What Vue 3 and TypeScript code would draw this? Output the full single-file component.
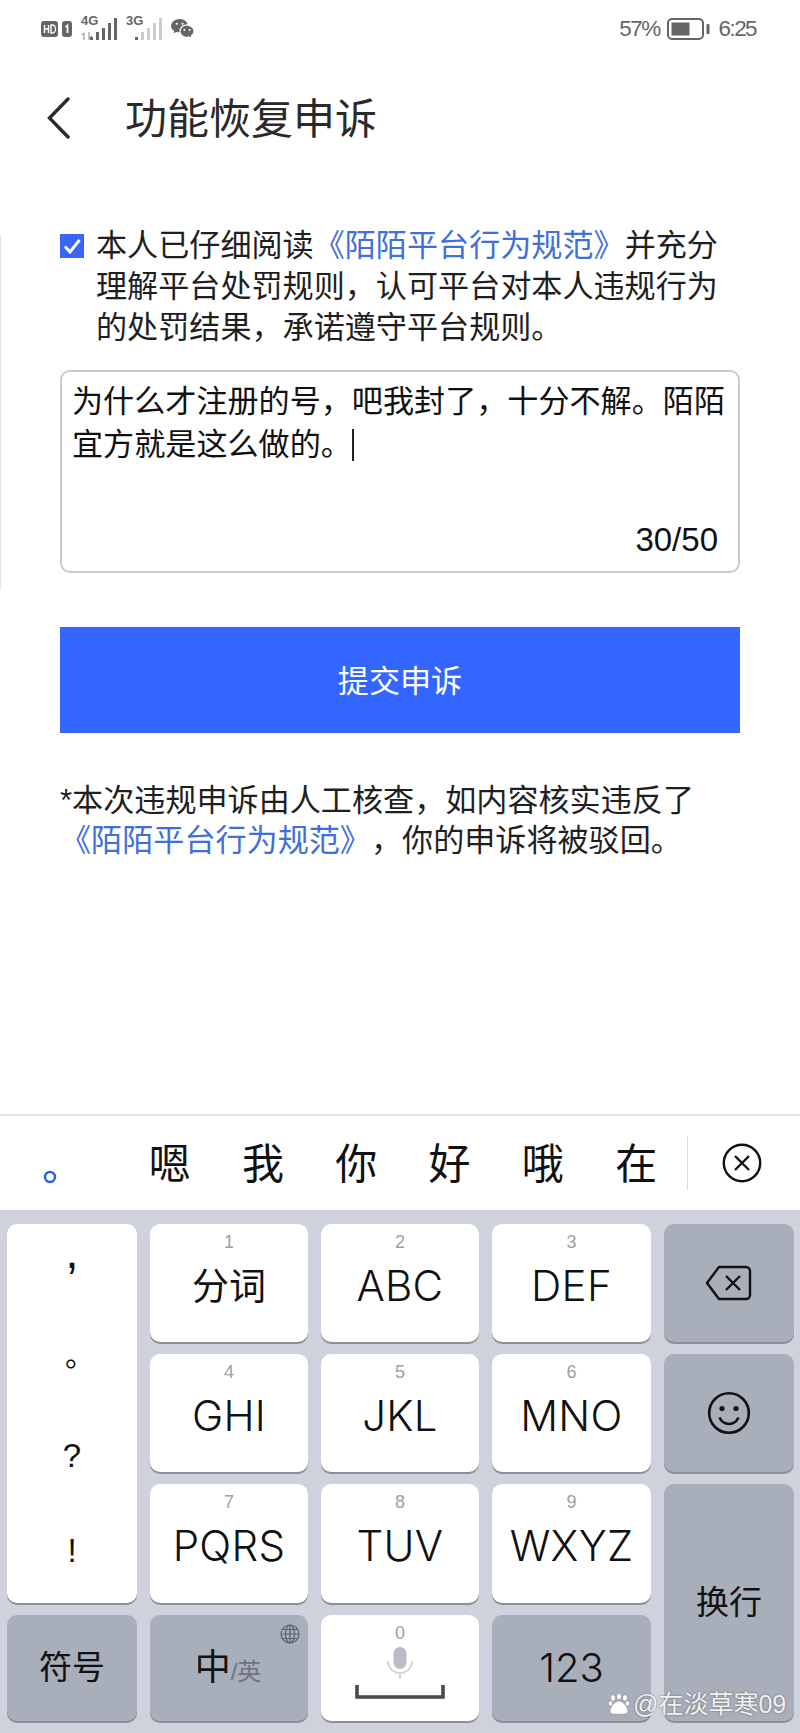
<script setup lang="ts">
interface KeyDef {
  num?: string
  label: string
  zh?: boolean
}
const row1: KeyDef[] = [
  { num: '1', label: '分词', zh: true },
  { num: '2', label: 'ABC' },
  { num: '3', label: 'DEF' }
]
const row2: KeyDef[] = [
  { num: '4', label: 'GHI' },
  { num: '5', label: 'JKL' },
  { num: '6', label: 'MNO' }
]
const row3: KeyDef[] = [
  { num: '7', label: 'PQRS' },
  { num: '8', label: 'TUV' },
  { num: '9', label: 'WXYZ' }
]
const candidates: string[] = ['嗯', '我', '你', '好', '哦', '在']
const bars = [3, 8, 12, 17, 22]
</script>

<template>
  <div class="page">
    <div class="edge-line"></div>

    <header class="status">
      <div class="status-left">
        <svg class="ic-hd" width="31" height="17" viewBox="0 0 31 17">
          <rect x="0" y="0" width="17" height="16" rx="3" fill="#666" />
          <rect x="21" y="0" width="10" height="16" rx="3" fill="#666" />
          <path d="M3.500 4v8M7.500 4v8M3.500 8h4M10 4v8h1.500a3 4 0 0 0 0-8z" stroke="#fff" stroke-width="1.400" fill="none" />
          <path d="M24.500 6l2-1.500V12" stroke="#fff" stroke-width="1.800" fill="none" />
        </svg>
        <div class="net">
          <span class="net-label">4G</span>
          <svg class="net-arrows" width="12" height="8" viewBox="0 0 12 8">
            <path d="M3 8V1M1 3l2-2M8 0v7l3-3" stroke="#aaa" stroke-width="1.400" fill="none" />
          </svg>
          <svg class="net-bars" width="27" height="22" viewBox="0 0 27 22">
            <rect v-for="(b, i) in bars" :key="i" :x="i * 6" :y="22 - b" width="3" :height="b" fill="#666" />
          </svg>
        </div>
        <div class="net">
          <span class="net-label">3G</span>
          <svg class="net-bars" width="27" height="22" viewBox="0 0 27 22">
            <rect v-for="(b, i) in bars" :key="i" :x="i * 6" :y="22 - b" width="3" :height="b" :fill="i === 0 ? '#666' : '#ccc'" />
          </svg>
        </div>
        <svg class="ic-wechat" width="23" height="20" viewBox="0 0 24 21">
          <path d="M9 0C4 0 0 3.200 0 7.200c0 2.300 1.300 4.200 3.300 5.500L2.500 15l2.800-1.400c1 .3 2 .4 3 .4h.7a6 6 0 0 1-.2-1.500C8.800 8.500 12.500 5.500 17.500 5.500 16.500 2.300 13 0 9 0z" fill="#666" />
          <path d="M16.500 7C12.400 7 10 9.700 10 12.800s2.700 5.800 6.500 5.800c.9 0 1.700-.1 2.500-.4l2.300 1.300-.6-2.100c1.700-1.100 2.800-2.800 2.800-4.600C23.500 9.700 20.500 7 16.500 7z" fill="#666" />
          <circle cx="6" cy="5" r="1.100" fill="#fff" />
          <circle cx="12" cy="5" r="1.100" fill="#fff" />
          <circle cx="14" cy="11.500" r="1" fill="#fff" />
          <circle cx="19.500" cy="11.500" r="1" fill="#fff" />
        </svg>
      </div>
      <div class="status-right">
        <span class="pct">57%</span>
        <svg class="battery" width="43" height="22" viewBox="0 0 43 22">
          <rect x="1" y="1" width="35" height="20" rx="4" fill="none" stroke="#666" stroke-width="2" />
          <rect x="4.500" y="4.500" width="18" height="13" fill="#666" />
          <rect x="39.500" y="6" width="3" height="10" rx="1" fill="#666" />
        </svg>
        <span class="clock">6:25</span>
      </div>
    </header>

    <nav class="nav">
      <svg class="back" width="24" height="42" viewBox="0 0 24 42">
        <path d="M21 2 2.500 21 21 40" fill="none" stroke="#2b2b2b" stroke-width="3.400" stroke-linecap="round" />
      </svg>
      <h1 class="title">功能恢复申诉</h1>
    </nav>

    <main class="content">
      <div class="consent">
        <span class="check">
          <svg width="24" height="24" viewBox="0 0 24 24">
            <rect width="24" height="24" fill="#3a66f5" />
            <path d="M5 12.500l5 5.500 9.500-12" fill="none" stroke="#fff" stroke-width="3" />
          </svg>
        </span>
        <p class="consent-text">本人已仔细阅读<span class="link">《陌陌平台行为规范》</span>并充分<br />理解平台处罚规则，认可平台对本人违规行为<br />的处罚结果，承诺遵守平台规则。</p>
      </div>

      <div class="field">
        <p class="field-text">为什么才注册的号，吧我封了，十分不解。陌陌<br />宜方就是这么做的。<span class="caret"></span></p>
        <span class="counter">30/50</span>
      </div>

      <button class="submit" type="button">提交申诉</button>

      <p class="note">*本次违规申诉由人工核查，如内容核实违反了<br /><span class="link">《陌陌平台行为规范》</span>，你的申诉将被驳回。</p>
    </main>

    <section class="candidates">
      <span class="cand-dot">
        <svg width="14" height="14" viewBox="0 0 14 14"><circle cx="7" cy="7" r="5" fill="none" stroke="#2a62d8" stroke-width="2.400" /></svg>
      </span>
      <span v-for="c in candidates" :key="c" class="cand">{{ c }}</span>
      <span class="cand-div"></span>
      <svg class="cand-close" width="40" height="40" viewBox="0 0 40 40">
        <circle cx="20" cy="20" r="18.200" fill="none" stroke="#111" stroke-width="2.400" />
        <path d="M13 13l14 14M27 13 13 27" stroke="#111" stroke-width="2.400" />
      </svg>
    </section>

    <section class="keyboard">
      <div class="key key-symbols">
        <span class="sym sym-comma">,</span>
        <span class="sym sym-dot">。</span>
        <span class="sym">?</span>
        <span class="sym">!</span>
      </div>

      <div v-for="k in row1" :key="k.label" class="key">
        <span class="num">{{ k.num }}</span>
        <span :class="k.zh ? 'label-zh' : 'label'">{{ k.label }}</span>
      </div>
      <div class="key key-gray key-center">
        <svg width="48" height="36" viewBox="0 0 48 36">
          <path d="M14 2h27a4 4 0 0 1 4 4v24a4 4 0 0 1-4 4H14L2 18z" fill="none" stroke="#111" stroke-width="2.400" stroke-linejoin="round" />
          <path d="M21 11l14 14M35 11 21 25" stroke="#111" stroke-width="2.400" />
        </svg>
      </div>

      <div v-for="k in row2" :key="k.label" class="key">
        <span class="num">{{ k.num }}</span>
        <span class="label">{{ k.label }}</span>
      </div>
      <div class="key key-gray key-center">
        <svg width="44" height="44" viewBox="0 0 44 44">
          <circle cx="22" cy="22" r="19.800" fill="none" stroke="#111" stroke-width="2.600" />
          <circle cx="15" cy="17.500" r="2.600" fill="#111" />
          <circle cx="29" cy="17.500" r="2.600" fill="#111" />
          <path d="M12.500 26.500c2 4.500 5.500 6.500 9.500 6.500s7.500-2 9.500-6.500" fill="none" stroke="#111" stroke-width="2.600" />
        </svg>
      </div>

      <div v-for="k in row3" :key="k.label" class="key">
        <span class="num">{{ k.num }}</span>
        <span class="label">{{ k.label }}</span>
      </div>
      <div class="key key-gray key-center key-enter">
        <span class="zh-label">换行</span>
      </div>

      <div class="key key-gray key-center">
        <span class="zh-label">符号</span>
      </div>
      <div class="key key-gray key-center key-lang">
        <svg class="globe" width="20" height="20" viewBox="0 0 20 20">
          <g fill="none" stroke="#5d6270" stroke-width="1.200">
            <circle cx="10" cy="10" r="9" />
            <ellipse cx="10" cy="10" rx="4.500" ry="9" />
            <path d="M10 1v18M1 10h18M2.200 5.500h15.600M2.200 14.500h15.600" />
          </g>
        </svg>
        <span class="lang"><span class="lang-zh">中</span><span class="lang-en">/英</span></span>
      </div>
      <div class="key key-space">
        <span class="num">0</span>
        <svg class="mic" width="28" height="32" viewBox="0 0 28 32">
          <rect x="7.500" y="0" width="13" height="22" rx="6.500" fill="#b9bcc6" />
          <path d="M2 14c0 7 5 12 12 12s12-5 12-12" fill="none" stroke="#d4d6dc" stroke-width="2" />
          <path d="M14 26v6" stroke="#d4d6dc" stroke-width="2" />
        </svg>
        <svg class="spacebar" width="90" height="14" viewBox="0 0 90 14">
          <path d="M2 0v12h86V0" fill="none" stroke="#4a4a4a" stroke-width="3.600" />
        </svg>
      </div>
      <div class="key key-gray key-center">
        <span class="label">123</span>
      </div>
    </section>

    <div class="watermark">
      <svg width="22" height="22" viewBox="0 0 22 22">
        <g fill="#fff" stroke="#555" stroke-width=".4">
          <ellipse cx="5" cy="5" rx="2.400" ry="3.200" />
          <ellipse cx="17" cy="5" rx="2.400" ry="3.200" />
          <ellipse cx="11" cy="3.500" rx="2.400" ry="3.200" />
          <ellipse cx="2.500" cy="10.500" rx="2.200" ry="2.800" />
          <ellipse cx="19.500" cy="10.500" rx="2.200" ry="2.800" />
          <path d="M11 8c4 0 9 6 9 10 0 3-3 3.500-5 3.200H7C4.500 21.500 2 21 2 18c0-4 5-10 9-10z" />
        </g>
      </svg>
      <span>@在淡草寒09</span>
    </div>
  </div>
</template>

<style scoped>
.page {
  position: relative;
  width: 800px;
  height: 1733px;
  display: flex;
  flex-direction: column;
  background: #fff;
  color: #1f1f1f;
  font-family: "Liberation Sans", "Noto Sans CJK SC", sans-serif;
  text-spacing-trim: space-all;
  overflow: hidden;
}
.edge-line {
  position: absolute;
  left: 0;
  top: 235px;
  width: 1px;
  height: 355px;
  background: #e4e4e4;
}
.status {
  height: 58px;
  flex: none;
  display: flex;
  justify-content: space-between;
  align-items: center;
  padding: 0 44px 0 41px;
  color: #666;
}
.status-left {
  display: flex;
  align-items: center;
  gap: 9px;
}
.net {
  position: relative;
  width: 36px;
  height: 24px;
}
.net-label {
  position: absolute;
  left: 0;
  top: -3px;
  font-family: "Liberation Sans Narrow", "Liberation Sans", sans-serif;
  font-size: 13px;
  font-weight: 700;
  line-height: 14px;
  color: #666;
}
.net-arrows {
  position: absolute;
  left: 0;
  bottom: 1px;
}
.net-bars {
  position: absolute;
  right: 0;
  bottom: 1px;
}
.status-right {
  display: flex;
  align-items: center;
  gap: 7px;
  font-size: 22.5px;
  letter-spacing: -1.600px;
}
.clock {
  margin-left: 2px;
}
.nav {
  height: 120px;
  flex: none;
  display: flex;
  align-items: center;
  padding-left: 47px;
}
.back {
  flex: none;
}
.title {
  margin: 4px 0 0 54px;
  font-size: 42px;
  line-height: 60px;
  font-weight: 400;
  color: #2a2a2a;
}
.content {
  flex: 1;
  padding: 47px 60px 0;
  font-size: 31.1px;
}
.consent {
  display: flex;
  align-items: flex-start;
  gap: 12px;
}
.check {
  flex: none;
  display: block;
  width: 24px;
  height: 24px;
  margin-top: 9px;
}
.check svg {
  display: block;
}
.consent-text {
  margin: 0;
  line-height: 41px;
}
.link {
  color: #3f6fd8;
}
.field {
  position: relative;
  box-sizing: border-box;
  height: 203px;
  margin-top: 22px;
  padding: 8px 9px 8px 10px;
  border: 2px solid #cbcbcb;
  border-radius: 10px;
}
.field-text {
  margin: 0;
  line-height: 43px;
  color: #111;
}
.caret {
  display: inline-block;
  width: 2px;
  height: 32px;
  vertical-align: -6px;
  background: #222;
}
.counter {
  position: absolute;
  right: 20px;
  bottom: 13px;
  font-size: 33px;
  line-height: 36px;
  color: #111;
}
.submit {
  display: block;
  width: 100%;
  height: 106px;
  margin-top: 54px;
  padding: 0 0 4px;
  border: 0;
  background: #3366ff;
  color: #fff;
  font: inherit;
}
.note {
  margin: 48px 0 0;
  line-height: 40px;
}
.candidates {
  flex: none;
  box-sizing: border-box;
  height: 96px;
  display: flex;
  align-items: center;
  border-top: 2px solid #e2e2e2;
}
.cand-dot {
  flex: none;
  width: 123px;
  padding: 28px 0 0 43px;
  box-sizing: border-box;
  line-height: 0;
}
.cand {
  flex: none;
  width: 93.3px;
  margin-top: 4px;
  text-align: center;
  font-size: 42px;
  line-height: 56px;
  color: #111;
}
.cand-div {
  flex: none;
  width: 1px;
  height: 54px;
  margin-left: 4px;
  background: #d8d8d8;
}
.cand-close {
  flex: none;
  margin-left: 34px;
}
.keyboard {
  flex: none;
  box-sizing: border-box;
  height: 523px;
  padding: 14px 0 0 7px;
  background: #cfd2dc;
  display: grid;
  grid-template-columns: 130px 158px 158px 159px 130px;
  grid-template-rows: 118px 118px 119px 106px;
  column-gap: 13px;
  row-gap: 12px;
}
.key {
  position: relative;
  display: flex;
  flex-direction: column;
  align-items: center;
  border-radius: 10px;
  background: #fff;
  box-shadow: 0 2px 0 #8e8e96;
}
.key-gray {
  background: #a8aeba;
}
.key-center {
  justify-content: center;
}
.key-symbols {
  grid-row: span 3;
  justify-content: space-around;
}
.key-enter {
  grid-row: span 2;
}
.sym {
  font-size: 33px;
  line-height: 40px;
  color: #111;
  transform: translateY(-5px);
}
.sym-comma {
  font-size: 48px;
  transform: translateY(-19px);
}
.sym-dot {
  font-size: 30px;
  transform: translate(8px, -10px);
}
.num {
  margin-top: 7px;
  font-size: 18px;
  line-height: 22px;
  color: #a0a0a0;
}
.label {
  font-family: Inter, "Liberation Sans", sans-serif;
  font-size: 42px;
  font-weight: 300;
  letter-spacing: 0.3px;
  line-height: 46px;
  margin-top: 10px;
  color: #111;
}
.label-zh {
  font-size: 37px;
  line-height: 46px;
  margin-top: 12px;
  color: #111;
}
.key-center .label {
  margin-top: 0;
  font-size: 40px;
  letter-spacing: 0;
}
.zh-label {
  font-size: 33px;
  line-height: 44px;
  color: #111;
}
.globe {
  position: absolute;
  top: 9px;
  right: 8px;
}
.lang {
  display: flex;
  align-items: flex-end;
  margin-left: -2px;
}
.lang-zh {
  font-size: 36px;
  line-height: 46px;
  color: #111;
}
.lang-en {
  font-size: 24px;
  line-height: 38px;
  color: #6f7480;
}
.mic {
  position: absolute;
  left: 65px;
  top: 32px;
}
.spacebar {
  position: absolute;
  left: 34px;
  top: 70px;
}
.watermark {
  position: absolute;
  left: 608px;
  bottom: 14px;
  display: flex;
  align-items: center;
  gap: 3px;
  font-size: 25px;
  line-height: 30px;
  color: rgba(255, 255, 255, 0.92);
  text-shadow: 0 0 2px rgba(60, 60, 60, 0.7);
}
</style>

<style>
html,
body {
  margin: 0;
  background: #fff;
}
</style>
